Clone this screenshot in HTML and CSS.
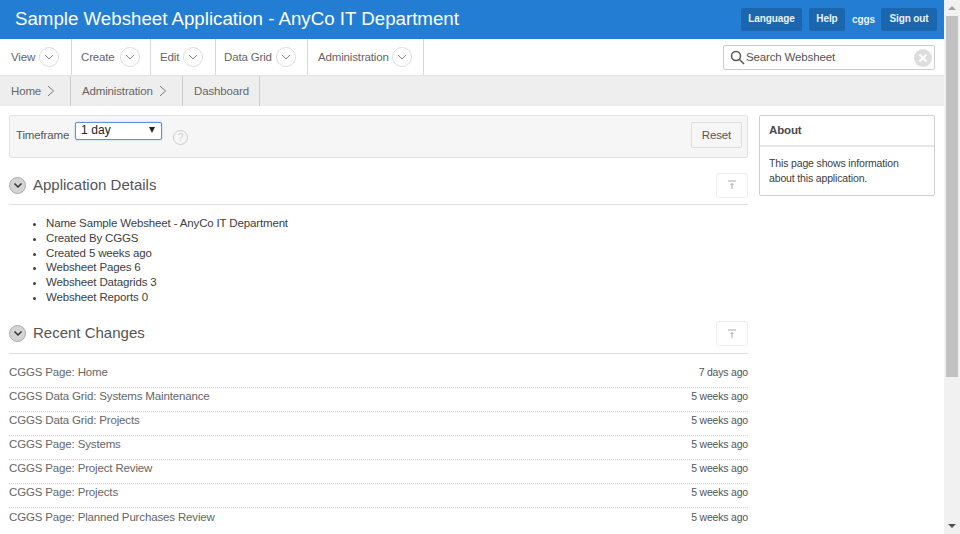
FILE: index.html
```html
<!DOCTYPE html>
<html lang="en">

<head>
    <meta charset="UTF-8">
    <title>Dashboard</title>
    <link rel="stylesheet" href="styles.css">
</head>

<body>
    <div class="page">
        <div class="header">
            <div class="app-title">Sample Websheet Application - AnyCo IT Department</div>
            <div class="header-links">
                <a class="header-btn lang">Language</a>
                <a class="header-btn help">Help</a>
                <span class="user">cggs</span>
                <a class="header-btn sign">Sign out</a>
            </div>
        </div>

        <div class="menubar">
            <div class="menu-item w-view">View <span class="menu-arrow"><svg width="10" height="6" viewBox="0 0 10 6"><path d="M1 1l4 4 4-4" /></svg></span></div>
            <div class="menu-item w-create">Create <span class="menu-arrow"><svg width="10" height="6" viewBox="0 0 10 6"><path d="M1 1l4 4 4-4" /></svg></span></div>
            <div class="menu-item w-edit">Edit <span class="menu-arrow"><svg width="10" height="6" viewBox="0 0 10 6"><path d="M1 1l4 4 4-4" /></svg></span></div>
            <div class="menu-item w-grid">Data Grid <span class="menu-arrow"><svg width="10" height="6" viewBox="0 0 10 6"><path d="M1 1l4 4 4-4" /></svg></span></div>
            <div class="menu-item w-admin">Administration <span class="menu-arrow"><svg width="10" height="6" viewBox="0 0 10 6"><path d="M1 1l4 4 4-4" /></svg></span></div>
            <div class="search">
                <svg class="search-icon" width="15" height="15" viewBox="0 0 15 15"><circle cx="6" cy="6" r="4.500" /><path d="M9.500 9.500l4.500 4.500" /></svg>
                <span class="search-text">Search Websheet</span>
                <svg class="search-clear" width="18" height="18" viewBox="0 0 18 18"><circle cx="9" cy="9" r="9" /><path d="M5.500 5.500l7 7M12.500 5.500l-7 7" /></svg>
            </div>
        </div>

        <div class="crumbs">
            <div class="crumb w-home">Home <svg width="8" height="12" viewBox="0 0 8 12"><path d="M1 1l5.500 5-5.500 5" /></svg></div>
            <div class="crumb w-crumb-admin">Administration <svg width="8" height="12" viewBox="0 0 8 12"><path d="M1 1l5.500 5-5.500 5" /></svg></div>
            <div class="crumb w-dash">Dashboard</div>
        </div>

        <div class="content">
            <div class="main-col">
                <div class="filter">
                    <span class="filter-label">Timeframe</span>
                    <div class="fake-select">1 day<span class="select-arrow"></span></div>
                    <span class="help-icon">?</span>
                    <a class="reset-btn">Reset</a>
                </div>

                <div class="region-head">
                    <span class="toggle"><svg width="10" height="7" viewBox="0 0 10 7"><path d="M1.500 1.500l3.500 3.500 3.500-3.500" /></svg></span>
                    <h2>Application Details</h2>
                    <a class="top-btn"><svg width="10" height="10" viewBox="0 0 10 10"><path d="M1 1h8M5 9V3.500M3.500 5L5 3.500 6.500 5" /></svg></a>
                </div>
                <ul class="details">
                    <li>Name Sample Websheet - AnyCo IT Department</li>
                    <li>Created By CGGS</li>
                    <li>Created 5 weeks ago</li>
                    <li>Websheet Pages 6</li>
                    <li>Websheet Datagrids 3</li>
                    <li>Websheet Reports 0</li>
                </ul>

                <div class="region-head">
                    <span class="toggle"><svg width="10" height="7" viewBox="0 0 10 7"><path d="M1.500 1.500l3.500 3.500 3.500-3.500" /></svg></span>
                    <h2>Recent Changes</h2>
                    <a class="top-btn"><svg width="10" height="10" viewBox="0 0 10 10"><path d="M1 1h8M5 9V3.500M3.500 5L5 3.500 6.500 5" /></svg></a>
                </div>
                <div class="changes">
                    <div class="change"><span>CGGS Page: Home</span><span class="when">7 days ago</span></div>
                    <div class="change"><span>CGGS Data Grid: Systems Maintenance</span><span class="when">5 weeks ago</span></div>
                    <div class="change"><span>CGGS Data Grid: Projects</span><span class="when">5 weeks ago</span></div>
                    <div class="change"><span>CGGS Page: Systems</span><span class="when">5 weeks ago</span></div>
                    <div class="change"><span>CGGS Page: Project Review</span><span class="when">5 weeks ago</span></div>
                    <div class="change"><span>CGGS Page: Projects</span><span class="when">5 weeks ago</span></div>
                    <div class="change"><span>CGGS Page: Planned Purchases Review</span><span class="when">5 weeks ago</span></div>
                </div>
            </div>

            <div class="about">
                <div class="about-head">About</div>
                <div class="about-body">This page shows information about this application.</div>
            </div>
        </div>
    </div>

    <div class="scrollbar">
        <div class="scroll-btn"><span class="arrow-up"></span></div>
        <div class="scroll-track"><div class="scroll-thumb"></div></div>
        <div class="scroll-btn"><span class="arrow-down"></span></div>
    </div>
</body>

</html>
```

FILE: styles.css
```css
* {
    margin: 0;
    padding: 0;
    box-sizing: border-box;
}

html,
body {
    width: 100%;
    height: 100%;
    overflow: hidden;
    background: #fff;
}

body {
    display: flex;
    font-family: "Liberation Sans", Arial, sans-serif;
    font-size: 11.5px;
    letter-spacing: -0.15px;
    color: #404040;
}

.page {
    width: 944px;
    height: 534px;
    overflow: hidden;
    flex: none;
}

/* header */
.header {
    height: 39px;
    background: #237dd2;
    display: flex;
    align-items: center;
    justify-content: space-between;
    padding: 0 7px 1px 15px;
}

.app-title {
    font-size: 18.700px;
    letter-spacing: 0;
    color: #fff;
}

.header-links {
    display: flex;
    align-items: center;
}

.header-btn {
    height: 23px;
    line-height: 21px;
    text-align: center;
    font-size: 10px;
    font-weight: bold;
    letter-spacing: -0.1px;
    color: #e8f2fb;
    background: #1b66ad;
    border-radius: 2px;
}

.lang {
    width: 61px;
    margin-right: 7px;
}

.help {
    width: 36px;
}

.sign {
    width: 56px;
}

.user {
    width: 22px;
    font-size: 10px;
    font-weight: bold;
    letter-spacing: -0.1px;
    color: #e8f2fb;
    margin: 0 7px;
}

/* menu */
.menubar {
    height: 37px;
    display: flex;
    align-items: stretch;
    background: #fff;
    border-bottom: 1px solid #e4e4e4;
    position: relative;
}

.menu-item {
    display: flex;
    align-items: center;
    gap: 4px;
    padding-left: 11px;
    color: #666;
    border-right: 1px solid #d8d8d8;
}

.w-view { width: 72px; }
.w-create { width: 79px; padding-left: 9px; gap: 5px; }
.w-edit { width: 65px; padding-left: 9px; }
.w-grid { width: 92px; padding-left: 8px; }
.w-admin { width: 116px; padding-left: 10px; gap: 3px; }

.menu-arrow {
    width: 20px;
    height: 20px;
    border: 1px solid #ddd;
    border-radius: 50%;
    display: flex;
    align-items: center;
    justify-content: center;
}

.menu-arrow path {
    fill: none;
    stroke: #888;
    stroke-width: 1;
}

.search {
    margin: 6px 9px 5px auto;
    width: 212px;
    height: 25px;
    border: 1px solid #ccc;
    border-radius: 2px;
    display: flex;
    align-items: center;
    padding: 0 2px 0 6px;
    background: #fff;
}

.search-icon circle,
.search-icon path {
    fill: none;
    stroke: #555;
    stroke-width: 1.500;
}

.search-text {
    margin-left: 1px;
    margin-bottom: 1px;
    color: #555;
    flex: 1;
}

.search-clear circle {
    fill: #ddd;
}

.search-clear path {
    stroke: #fff;
    stroke-width: 2;
}

/* breadcrumb */
.crumbs {
    height: 30px;
    background: #eee;
    display: flex;
    align-items: stretch;
}

.crumb {
    display: flex;
    align-items: center;
    gap: 6px;
    color: #666;
    padding-left: 11px;
    padding-bottom: 1px;
    border-right: 1px solid #ccc;
}

.crumb path {
    fill: none;
    stroke: #777;
    stroke-width: 1;
}

.w-home { width: 71px; }
.w-crumb-admin { width: 112px; }
.w-dash { width: 77px; }

/* content */
.content {
    display: flex;
    align-items: flex-start;
    padding: 9px 9px 0 9px;
    gap: 11px;
}

.main-col {
    width: 739px;
    flex: none;
}

.filter {
    height: 43px;
    background: #f6f6f6;
    border: 1px solid #e2e2e2;
    border-radius: 2px;
    display: flex;
    align-items: flex-start;
    padding: 6px 5px 0 6px;
}

.filter-label {
    width: 53px;
    margin-top: 7px;
    color: #555;
}

.fake-select {
    width: 87px;
    height: 18px;
    margin-left: 6px;
    border: 1px solid #5b93dc;
    box-shadow: 0 0 2px #9dc0ee;
    border-radius: 2px;
    background: #fff;
    color: #222;
    font-size: 12px;
    letter-spacing: 0.1px;
    line-height: 15px;
    padding-left: 5px;
    position: relative;
}

.select-arrow {
    position: absolute;
    right: 6px;
    top: 4px;
    border-left: 3px solid transparent;
    border-right: 3px solid transparent;
    border-top: 6px solid #222;
}

.help-icon {
    width: 15px;
    height: 15px;
    margin: 8px 0 0 11px;
    border: 1px solid #ccc;
    border-radius: 50%;
    color: #ccc;
    font-size: 10px;
    line-height: 13px;
    text-align: center;
}

.reset-btn {
    margin-left: auto;
    width: 51px;
    height: 26px;
    line-height: 24px;
    text-align: center;
    border: 1px solid #ddd;
    border-radius: 2px;
    color: #555;
}

.region-head {
    height: 47px;
    display: flex;
    align-items: center;
    border-bottom: 1px solid #dedede;
    padding-top: 8px;
}

.toggle {
    width: 17px;
    height: 17px;
    border-radius: 50%;
    background: #d4d4d4;
    border: 1px solid #aaa;
    display: flex;
    align-items: center;
    justify-content: center;
    margin-right: 7px;
}

.toggle path {
    fill: none;
    stroke: #333;
    stroke-width: 1.500;
}

.region-head h2 {
    font-size: 15px;
    font-weight: normal;
    letter-spacing: 0;
    margin-bottom: 2px;
    color: #555;
}

.top-btn {
    margin-left: auto;
    width: 32px;
    height: 25px;
    border: 1px solid #eee;
    border-radius: 3px;
    display: flex;
    align-items: center;
    justify-content: center;
}

.top-btn path {
    fill: none;
    stroke: #aaa;
    stroke-width: 1;
}

.details {
    padding: 11px 0 2.200px 37px;
    line-height: 14.800px;
    color: #404040;
}

.changes {
    padding-top: 10px;
}

.change {
    height: 24px;
    line-height: 16px;
    display: flex;
    justify-content: space-between;
    border-bottom: 1px dotted #d4d4d4;
    color: #666;
}

.change:last-child {
    border-bottom: none;
    padding-top: 1px;
}

.when {
    font-size: 10.500px;
    letter-spacing: -0.2px;
    color: #555;
}

/* about */
.about {
    width: 176px;
    height: 81px;
    border: 1px solid #d0d0d0;
    border-radius: 2px;
    flex: none;
}

.about-head {
    height: 31px;
    line-height: 29px;
    padding-left: 9px;
    font-weight: bold;
    color: #4a4a4a;
    border-bottom: 2px solid #e6e6e6;
}

.about-body {
    padding: 9px;
    font-size: 10.500px;
    line-height: 15px;
}

/* scrollbar */
.scrollbar {
    width: 16px;
    height: 534px;
    background: #f1f1f1;
    display: flex;
    flex-direction: column;
}

.scroll-btn {
    height: 16px;
    display: flex;
    align-items: center;
    justify-content: center;
    flex: none;
}

.arrow-up {
    border-left: 4px solid transparent;
    border-right: 4px solid transparent;
    border-bottom: 4px solid #a3a3a3;
}

.arrow-down {
    border-left: 4px solid transparent;
    border-right: 4px solid transparent;
    border-top: 4px solid #505050;
}

.scroll-track {
    flex: 1;
    padding: 0 2px;
}

.scroll-thumb {
    height: 361px;
    background: #c1c1c1;
}
```
